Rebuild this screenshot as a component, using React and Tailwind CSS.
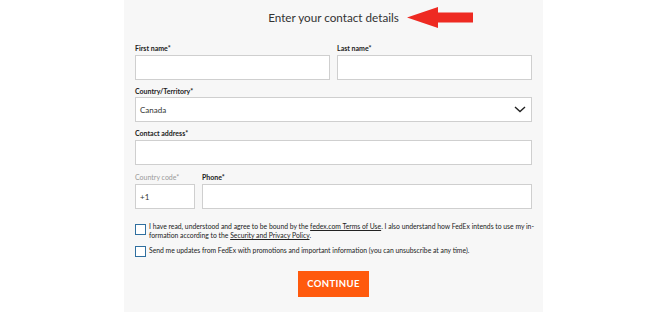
import React from "react";

const Label = ({ children, muted }) => (
  <div
    className={`text-[7px] leading-[8px] ${
      muted ? "text-[#9a9a9a] font-normal" : "text-[#222] font-bold"
    }`}
  >
    {children}
  </div>
);

const Box = ({ children, className = "" }) => (
  <div
    className={`h-[25px] bg-white border border-[#cfcfcf] flex items-center px-[4px] text-[8px] text-[#333] ${className}`}
  >
    {children}
  </div>
);

const Checkbox = () => (
  <span className="mt-[2px] w-[11px] h-[11px] shrink-0 border-[1.5px] border-[#2f6f9f] bg-white" />
);

export default function App() {
  return (
    <div
      className="w-[670px] h-[312px] bg-white flex"
      style={{ fontFamily: 'Lato, "Noto Sans", sans-serif' }}
    >
      <div className="ml-[124px] w-[419px] h-full bg-[#f7f7f7] px-[11px] flex flex-col">
        {/* Heading with red arrow */}
        <div className="relative pt-[9px] text-center text-[11.7px] leading-[16px] text-[#333]">
          Enter your contact details
          <svg
            className="absolute left-[272px] top-[7px]"
            width="67"
            height="21"
            viewBox="0 0 67 21"
          >
            <polygon
              points="0,10.5 31,0 31,5.5 66,5.5 66,15.5 31,15.5 31,21"
              fill="#ee2a22"
            />
          </svg>
        </div>

        {/* Names */}
        <div className="mt-[19px] flex gap-[7px]">
          <div className="flex-1">
            <Label>First name*</Label>
            <Box className="mt-[3px]" />
          </div>
          <div className="flex-1">
            <Label>Last name*</Label>
            <Box className="mt-[3px]" />
          </div>
        </div>

        {/* Country */}
        <div className="mt-[7px]">
          <Label>Country/Territory*</Label>
          <Box className="mt-[2px] justify-between">
            <span>Canada</span>
            <svg width="12" height="7" viewBox="0 0 12 7" className="mr-[1px]">
              <path
                d="M1 1 L6 5.5 L11 1"
                fill="none"
                stroke="#222"
                strokeWidth="1.4"
              />
            </svg>
          </Box>
        </div>

        {/* Address */}
        <div className="mt-[7px]">
          <Label>Contact address*</Label>
          <Box className="mt-[3px] h-[24px]" />
        </div>

        {/* Phone */}
        <div className="mt-[8px] flex gap-[7px]">
          <div className="w-[60px]">
            <Label muted>Country code*</Label>
            <Box className="mt-[3px]">+1</Box>
          </div>
          <div className="flex-1">
            <Label>Phone*</Label>
            <Box className="mt-[3px]" />
          </div>
        </div>

        {/* Consents */}
        <div className="mt-[13px] flex gap-[3px] text-[6.8px] leading-[9px] text-[#222]">
          <Checkbox />
          <p className="whitespace-nowrap">
            I have read, understood and agree to be bound by the{" "}
            <span className="underline">fedex.com Terms of Use</span>. I also
            understand how FedEx intends to use my in-
            <br />
            formation according to the{" "}
            <span className="underline">Security and Privacy Policy</span>.
          </p>
        </div>
        <div className="mt-[4px] flex gap-[3px] text-[6.8px] leading-[9px] text-[#222]">
          <Checkbox />
          <p className="mt-[2px]">
            Send me updates from FedEx with promotions and important
            information (you can unsubscribe at any time).
          </p>
        </div>

        <div className="mt-[14px] flex justify-center">
          <button className="w-[71px] h-[26px] bg-[#ff5a0d] text-white text-[9.5px] font-bold tracking-[0.4px]">
            CONTINUE
          </button>
        </div>
      </div>
    </div>
  );
}
